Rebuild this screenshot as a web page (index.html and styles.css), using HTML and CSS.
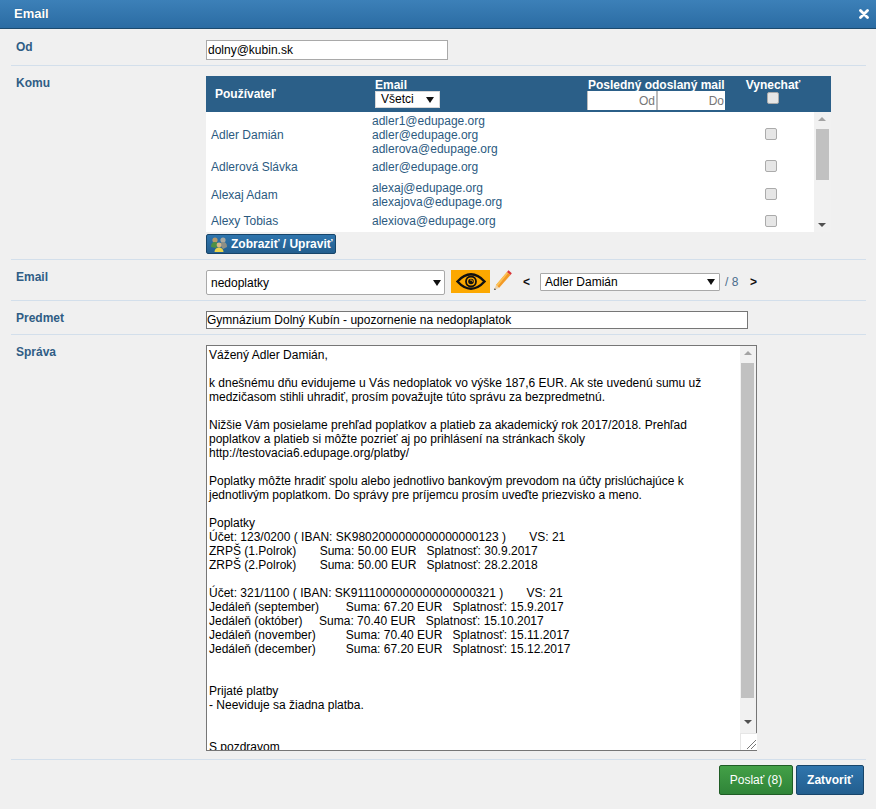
FILE: index.html
```html
<!DOCTYPE html>
<html lang="sk">
<head>
<meta charset="utf-8">
<title>Email</title>
<link rel="stylesheet" href="styles.css">
</head>
<body>
<div class="dialog">
  <header class="titlebar">
    <span class="title">Email</span>
    <svg class="close" width="10" height="10" viewBox="0 0 10 10"><path d="M1.5 1.5l7 7M8.500 1.500l-7 7" stroke="#fff" stroke-width="2.800" stroke-linecap="round"/></svg>
  </header>
  <main class="form">
    <section class="row row-od">
      <div class="label">Od</div>
      <input class="text od-input" type="text" value="dolny@kubin.sk">
    </section>
    <section class="row row-komu">
      <div class="label">Komu</div>
      <div class="komu">
        <div class="table">
          <div class="thead">
            <div class="th th-user">Používateľ</div>
            <div class="th th-email">
              <span>Email</span>
              <div class="select sel-all"><span>Všetci</span><i class="caret"></i></div>
            </div>
            <div class="th th-last">
              <span>Posledný odoslaný mail</span>
              <div class="dates"><input class="date" type="text" placeholder="Od"><input class="date" type="text" placeholder="Do"></div>
            </div>
            <div class="th th-skip">
              <span>Vynechať</span>
              <input class="check" type="checkbox">
            </div>
          </div>
          <div class="tbody">
            <div class="list">
              <div class="tr">
                <div class="name">Adler Damián</div>
                <div class="mails">adler1@edupage.org<br>adler@edupage.org<br>adlerova@edupage.org</div>
                <input class="check" type="checkbox">
              </div>
              <div class="tr">
                <div class="name">Adlerová Slávka</div>
                <div class="mails">adler@edupage.org</div>
                <input class="check" type="checkbox">
              </div>
              <div class="tr">
                <div class="name">Alexaj Adam</div>
                <div class="mails">alexaj@edupage.org<br>alexajova@edupage.org</div>
                <input class="check" type="checkbox">
              </div>
              <div class="tr">
                <div class="name">Alexy Tobias</div>
                <div class="mails">alexiova@edupage.org</div>
                <input class="check" type="checkbox">
              </div>
            </div>
            <div class="scrollbar sb-list">
              <i class="up"></i><b class="thumb"></b><i class="down"></i>
            </div>
          </div>
        </div>
        <button class="btn-show" type="button">
          <svg width="18" height="17" viewBox="0 0 18 17">
            <circle cx="5" cy="4" r="2.600" fill="#b89a6a"/>
            <circle cx="13" cy="4" r="2.600" fill="#a9a9a0"/>
            <path d="M1 11c0-4 2-5 4-5s3 1 4 3l-3 3z" fill="#4f8f45"/>
            <path d="M10 9c0-2 1-3 3-3s4 1 4 5l-4 2z" fill="#8d8f86"/>
            <circle cx="9" cy="9" r="2.400" fill="#d9b98a"/>
            <path d="M4.500 16c0-3 2-4.500 4.500-4.500s4.500 1.500 4.500 4.500z" fill="#e9d34a"/>
          </svg>
          <span>Zobraziť / Upraviť</span>
        </button>
      </div>
    </section>
    <section class="row row-email">
      <div class="label">Email</div>
      <div class="email-tools">
        <div class="select sel-tpl"><span>nedoplatky</span><i class="caret"></i></div>
        <button class="eye" type="button">
          <svg width="30" height="17" viewBox="0 0 30 17">
            <path d="M1.500 8.500C6.500 3 10.500 1.300 15 1.300S23.500 3 28.500 8.500C23.500 14 19.500 15.700 15 15.700S6.500 14 1.500 8.500z" fill="none" stroke="#111" stroke-width="2.400"/>
            <circle cx="15" cy="8.500" r="5" fill="none" stroke="#111" stroke-width="1.800"/>
            <circle cx="15" cy="8.500" r="2.800" fill="#111"/>
            <path d="M14 7a2.200 2.200 0 0 1 2.800 1.800" fill="none" stroke="#fca800" stroke-width="0.900"/>
          </svg>
        </button>
        <svg class="pencil" width="22" height="24" viewBox="0 0 22 24">
          <path d="M6 16L17 3l3.500 3L9 19z" fill="#f39a26"/>
          <path d="M6 16L17 3l1.200 1L7.500 17.500z" fill="#fbc257"/>
          <path d="M17 3l1.500-1.700 3.300 2.900L20.500 6z" fill="#d8343a"/>
          <path d="M6 16l3 3-5 2z" fill="#eed2a8"/>
          <path d="M4.700 19.300l1.400 1.200L4 21z" fill="#333"/>
        </svg>
        <span class="nav nav-prev">&lt;</span>
        <div class="select sel-person"><span>Adler Damián</span><i class="caret"></i></div>
        <span class="count">/ 8</span>
        <span class="nav nav-next">&gt;</span>
      </div>
    </section>
    <section class="row row-subject">
      <div class="label">Predmet</div>
      <input class="text subject" type="text" value="Gymnázium Dolný Kubín - upozornenie na nedoplaplatok">
    </section>
    <section class="row row-msg">
      <div class="label">Správa</div>
      <div class="message">
        <textarea class="msg-text" spellcheck="false">Vážený Adler Damián,

k dnešnému dňu evidujeme u Vás nedoplatok vo výške 187,6 EUR. Ak ste uvedenú sumu už medzičasom stihli uhradiť, prosím považujte túto správu za bezpredmetnú.

Nižšie Vám posielame prehľad poplatkov a platieb za akademický rok 2017/2018. Prehľad poplatkov a platieb si môžte pozrieť aj po prihlásení na stránkach školy http://testovacia6.edupage.org/platby/

Poplatky môžte hradiť spolu alebo jednotlivo bankovým prevodom na účty prislúchajúce k jednotlivým poplatkom. Do správy pre príjemcu prosím uveďte priezvisko a meno.

Poplatky
Účet: 123/0200 ( IBAN: SK9802000000000000000123 )       VS: 21
ZRPŠ (1.Polrok)       Suma: 50.00 EUR   Splatnosť: 30.9.2017
ZRPŠ (2.Polrok)       Suma: 50.00 EUR   Splatnosť: 28.2.2018

Účet: 321/1100 ( IBAN: SK9111000000000000000321 )       VS: 21
Jedáleň (september)        Suma: 67.20 EUR   Splatnosť: 15.9.2017
Jedáleň (október)     Suma: 70.40 EUR   Splatnosť: 15.10.2017
Jedáleň (november)         Suma: 70.40 EUR   Splatnosť: 15.11.2017
Jedáleň (december)         Suma: 67.20 EUR   Splatnosť: 15.12.2017


Prijaté platby
- Neeviduje sa žiadna platba.


S pozdravom</textarea>
        <div class="scrollbar sb-msg">
          <i class="up"></i><b class="thumb"></b><i class="down"></i>
          <div class="grip">
            <svg width="10" height="10" viewBox="0 0 10 10"><path d="M1 10L10 1M5 10l5-5" stroke="#777" stroke-width="1"/></svg>
          </div>
        </div>
      </div>
    </section>
  </main>
  <footer class="actions">
    <button class="btn send" type="button">Poslať (8)</button>
    <button class="btn shut" type="button">Zatvoriť</button>
  </footer>
</div>
</body>
</html>
```

FILE: styles.css
```css
* { box-sizing: border-box; }
html, body { margin: 0; padding: 0; height: 809px; overflow: hidden; }
body { background: #f0f0f0; font: 12px/14px "Liberation Sans", Arial, sans-serif; color: #000; }

.dialog { display: flex; flex-direction: column; width: 876px; height: 809px; }

.titlebar {
  display: flex; align-items: center; justify-content: space-between;
  height: 29px; flex: none; padding: 0 7px 0 14px;
  background: linear-gradient(#3c80b8, #2b6ca3);
  border-bottom: 1px solid #1c4a6e;
  color: #fff; font-weight: bold; font-size: 13px;
}
.title { text-shadow: 0 0 1px #1c4a6e; }

.form { flex: none; margin: 0 10px 0 11px; }
.row { display: flex; border-bottom: 1px solid #d3dfeb; }
.label { flex: none; width: 195px; padding-left: 5px; color: #2f5d85; font-weight: bold; }

.row-od { height: 37px; padding-top: 11px; }
.row-komu { height: 194px; padding-top: 10px; }
.row-email { height: 41px; padding-top: 10px; }
.row-subject { height: 34px; padding-top: 10px; }
.row-msg { height: 425px; padding-top: 10px; }

.text { font: 12px "Liberation Sans", Arial, sans-serif; background: #fff; color: #000; outline: 0; }
.od-input { width: 242px; height: 20px; padding: 0 1px; border: 1px solid #a9a9a9; }
.subject { width: 542px; height: 18px; padding: 0; border: 1px solid #767676; }

.komu { width: 625px; }
.table { width: 625px; }
.thead {
  display: grid; grid-template-columns: 169px 212px 138px 96px;
  height: 36px; background: #2b5f88; color: #fff; font-weight: bold;
}
.th { display: flex; flex-direction: column; align-items: flex-start; line-height: 13px; padding-top: 3px; }
.th-email .select { margin-top: -1px; }
.th-user { justify-content: center; padding: 0 0 0 10px; margin-left: -1px; }
.th-last { align-items: stretch; white-space: nowrap; }
.th-last > span { padding-left: 1px; }
.th-last .dates { margin-top: -1px; }
.th-skip { align-items: center; }
.th-skip .check { margin: 0; }

.select { position: relative; display: flex; align-items: center; background: #fff; color: #000; font-weight: normal; }
.caret { position: absolute; width: 0; height: 0; border: 4px solid transparent; border-top: 6px solid #111; border-bottom: 0; }
.sel-all { width: 65px; height: 17px; padding-left: 5px; border: 1px solid #d8d8d8; }
.sel-all .caret { left: 50px; top: 5px; }
.sel-tpl { width: 239px; height: 25px; padding-left: 4px; border: 1px solid #a9a9a9; border-radius: 2px; }
.sel-tpl .caret { left: 226px; top: 9px; }
.sel-person { width: 180px; height: 18px; padding-left: 4px; border: 1px solid #a9a9a9; border-radius: 1px; margin-top: 3px; margin-left: 10px; }
.sel-person .caret { left: 166px; top: 5px; }

.dates { display: flex; }
.date {
  width: 69px; height: 19px; padding: 0 1px 0 0; text-align: right;
  border: 0; border-left: 1px solid #bbb; outline: 0; background: #fff;
  font: 12px "Liberation Sans", Arial, sans-serif;
}
.date + .date { border-left: 2px solid #bbb; }
.date::placeholder { color: #777; opacity: 1; }

.tbody { display: flex; height: 120px; overflow: hidden; }
.list { width: 608px; height: 120px; background: #fff; overflow: hidden; }
.tr { display: grid; grid-template-columns: 166px 393px 12px; align-items: center; padding: 2px 0; color: #2b5a7f; }
.tr:nth-child(2) { padding: 2px 0 5px; }
.tr:nth-child(3) { padding: 2px 0; }
.tr:nth-child(4) { padding: 3px 0; }
.name { padding-left: 5px; }
.check {
  appearance: none; margin: 0; width: 12px; height: 12px;
  background: #e6e6e6; border: 1px solid #ababab; border-radius: 2px;
}
.tr:nth-child(-n+3) .check { margin-bottom: 2px; }

.scrollbar { position: relative; display: block; background: #f1f1f1; }
.sb-list { width: 17px; height: 120px; }
.scrollbar .up, .scrollbar .down { position: absolute; left: 4px; width: 0; height: 0; border: 4px solid transparent; }
.scrollbar .up { top: 5px; border-bottom: 4px solid #a3a3a3; border-top: 0; }
.scrollbar .down { bottom: 5px; border-top: 4px solid #505050; border-bottom: 0; }
.scrollbar .thumb { position: absolute; left: 2px; width: 13px; background: #c1c1c1; }
.sb-list .thumb { top: 17px; height: 51px; }

.btn-show {
  display: flex; align-items: center; gap: 3px; width: 130px; height: 20px; margin: 2px 0 0; padding: 0 0 0 3px;
  border: 1px solid #17456a; border-radius: 2px;
  background: linear-gradient(#2f75ad, #235e8e);
  color: #fff; font: bold 12px "Liberation Sans", Arial, sans-serif; white-space: nowrap;
}

.email-tools { display: flex; align-items: flex-start; }
.eye {
  display: flex; align-items: center; justify-content: center;
  width: 39px; height: 23px; margin-left: 6px; padding: 0; border: 0; background: #fca800;
}
.pencil { margin: -1px 0 0 0; flex: none; }
.nav { font-weight: bold; color: #111; margin-top: 5px; width: 7px; }
.nav-prev { margin-left: 11px; }
.count { color: #4a6d8c; margin: 5px 0 0 5px; width: 25px; }

.message { position: relative; display: flex; width: 551px; height: 406px; border: 1px solid #767676; background: #fff; }
.msg-text {
  flex: none; width: 533px; height: 404px; padding: 2px 2px; margin: 0; border: 0; outline: 0; resize: none; overflow: hidden;
  font: 12px/14px "Liberation Sans", Arial, sans-serif; color: #000; background: #fff; white-space: pre-wrap;
}
.sb-msg { width: 17px; height: 404px; }
.sb-msg .thumb { left: 1px; top: 17px; height: 335px; }
.sb-msg .down { bottom: 26px; }
.grip {
  position: absolute; left: 0; bottom: 0; width: 17px; height: 17px; background: #fff;
  border-top: 1px solid #e6e6e6; border-left: 1px solid #e6e6e6;
  display: flex; align-items: flex-end; justify-content: flex-end; padding: 0 1px 1px 0;
}

.actions { flex: none; display: flex; justify-content: flex-end; gap: 3px; padding: 5px 12px 0 0; }
.btn {
  height: 30px; padding: 0; border-radius: 2px; color: #fff;
  font: 12px "Liberation Sans", Arial, sans-serif;
}
.send { width: 74px; border: 1px solid #1f5c25; background: linear-gradient(#43a047, #2f8438); }
.shut { width: 68px; font-weight: bold; border: 1px solid #17456a; background: linear-gradient(#2f75ad, #235e8e); }
```
